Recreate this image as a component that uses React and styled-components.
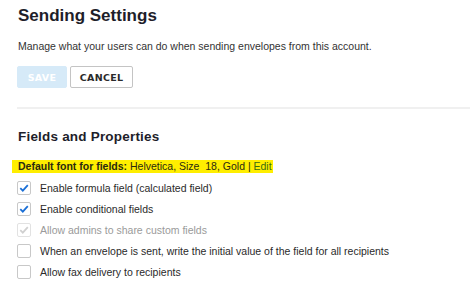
import React from 'react';
import styled, { createGlobalStyle } from 'styled-components';

const GlobalStyle = createGlobalStyle`
  body {
    margin: 0;
    background: #fff;
    font-family: "Liberation Sans", Arial, sans-serif;
    color: #1e1e1e;
  }
`;

const Page = styled.div`
  width: 470px;
  height: 285px;
  overflow: hidden;
  padding: 4px 0 0 17px;
  box-sizing: border-box;
`;

const Title = styled.h1`
  font-family: "Liberation Sans", Arial, sans-serif;
  font-size: 17px;
  font-weight: bold;
  margin: 0 0 0 1px;
  line-height: 24px;
  color: #1e1e2a;
`;

const Description = styled.p`
  font-size: 10.5px;
  margin: 11px 0 0 1px;
  line-height: 14px;
  color: #333;
`;

const Actions = styled.div`
  display: flex;
  gap: 3px;
  margin-top: 13px;
`;

const Button = styled.button`
  height: 22px;
  box-sizing: border-box;
  font-family: "DejaVu Sans", Verdana, sans-serif;
  font-size: 9.5px;
  font-weight: bold;
  letter-spacing: 0.3px;
  border-radius: 2px;
  padding: 0 8px;
  cursor: pointer;
  border: 1px solid ${(p) => (p.$primary ? '#d6eaf8' : '#c4c4c4')};
  background: ${(p) => (p.$primary ? '#d6eaf8' : '#fff')};
  color: ${(p) => (p.$primary ? '#fff' : '#2a2a2a')};
  width: ${(p) => p.$w}px;
`;

const Divider = styled.hr`
  border: 0;
  height: 2px;
  background: #f0f0f0;
  margin: 19px 0 0 0;
`;

const SectionTitle = styled.h2`
  font-family: "Liberation Sans", Arial, sans-serif;
  font-size: 13.5px;
  font-weight: bold;
  margin: 19px 0 0 1px;
  line-height: 18px;
  color: #1e1e2a;
  letter-spacing: 0.2px;
`;

const FontLine = styled.div`
  margin: 14px 0 0 -5px;
  width: 261px;
  height: 13px;
  background: #ffee00;
  font-size: 10.5px;
  line-height: 13px;
  padding-left: 6px;
  box-sizing: border-box;
  color: #2a2a10;
  white-space: pre;

  b {
    font-weight: bold;
  }
`;

const EditLink = styled.a`
  color: #3b6b12;
  text-decoration: none;
`;

const List = styled.div`
  display: flex;
  flex-direction: column;
  gap: 7px;
  margin-top: 8px;
`;

const Row = styled.label`
  display: flex;
  align-items: center;
  gap: 9px;
  font-size: 10.5px;
  line-height: 14px;
  color: ${(p) => (p.$disabled ? '#9a9a9a' : '#2a2a2a')};
`;

const Box = styled.span`
  width: 14px;
  height: 14px;
  box-sizing: border-box;
  border: 1px solid ${(p) => (p.$disabled ? '#e2e2e2' : '#c8c8c8')};
  border-radius: 2px;
  background: #fff;
  display: flex;
  align-items: center;
  justify-content: center;
`;

const Check = ({ color }) => (
  <svg width="10" height="10" viewBox="0 0 10 10">
    <path d="M1.3 5.2 L3.8 7.6 L8.8 2.2" fill="none" stroke={color} strokeWidth="1.8" />
  </svg>
);

const options = [
  { label: 'Enable formula field (calculated field)', checked: true },
  { label: 'Enable conditional fields', checked: true },
  { label: 'Allow admins to share custom fields', checked: true, disabled: true },
  { label: 'When an envelope is sent, write the initial value of the field for all recipients' },
  { label: 'Allow fax delivery to recipients' },
];

export default function App() {
  return (
    <Page>
      <GlobalStyle />
      <Title>Sending Settings</Title>
      <Description>Manage what your users can do when sending envelopes from this account.</Description>
      <Actions>
        <Button $primary $w={50}>SAVE</Button>
        <Button $w={63}>CANCEL</Button>
      </Actions>
      <Divider />
      <SectionTitle>Fields and Properties</SectionTitle>
      <FontLine>
        <b>Default font for fields:</b> Helvetica, Size  18, Gold | <EditLink href="#">Edit</EditLink>
      </FontLine>
      <List>
        {options.map((o) => (
          <Row key={o.label} $disabled={o.disabled}>
            <Box $disabled={o.disabled}>
              {o.checked && <Check color={o.disabled ? '#d0d0d0' : '#1a6fd6'} />}
            </Box>
            {o.label}
          </Row>
        ))}
      </List>
    </Page>
  );
}
